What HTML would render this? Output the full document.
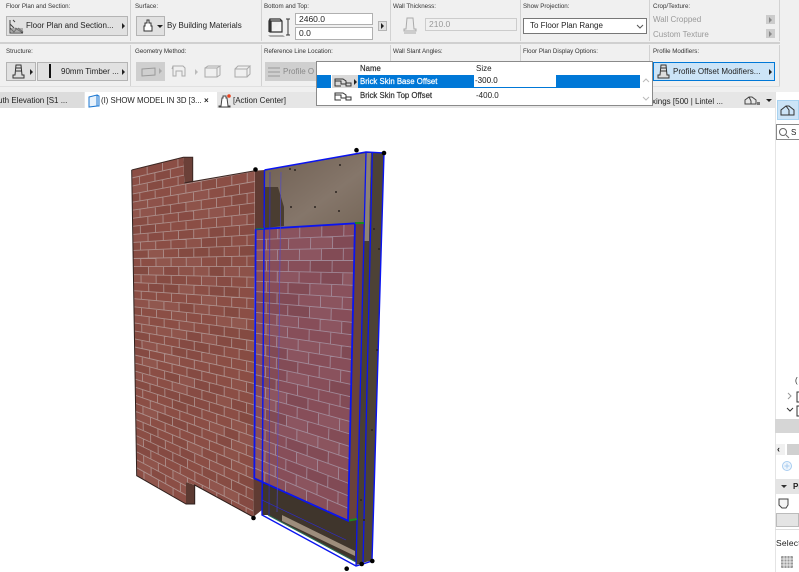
<!DOCTYPE html>
<html><head><meta charset="utf-8">
<style>
html,body{margin:0;padding:0;background:#fff}
#r{position:relative;width:799px;height:572px;overflow:hidden;background:#fff;font-family:"Liberation Sans",sans-serif;color:#222}
#r div,#r span.a{position:absolute;box-sizing:border-box}
.l{font-size:6.2px;color:#333;white-space:nowrap;line-height:9px}
.t{font-size:8px;color:#222;white-space:nowrap;line-height:11px}
.n{font-size:7.8px;-webkit-text-stroke:.2px currentColor;color:#333;white-space:nowrap;line-height:11px}
.b{background:#e1e1e1;border:1px solid #b4b4b4}
.g{background:#cfcfcf}
.i{background:#fff;border:1px solid #b0b0b0;font-size:8.5px;line-height:11px;padding-left:3px}
.v{width:1px;background:#d2d2d2}
.ar{width:0;height:0;border-left:3px solid #222;border-top:3px solid transparent;border-bottom:3px solid transparent}
svg{position:absolute;left:0;top:0}
#s{filter:blur(.35px)}
</style></head><body><div id="r">

<svg id="s" width="799" height="572" viewBox="0 0 799 572">
<defs>
<linearGradient id="wd" x1="0" y1="0" x2="1" y2="1"><stop offset="0" stop-color="#6f5f52"/><stop offset=".6" stop-color="#85766a"/><stop offset="1" stop-color="#766759"/></linearGradient>
<clipPath id="c1"><polygon points="131.7,170 183.3,157.3 184.3,183 255,170.7 253.3,517 195,485 186,482 186,504 136.7,475.7"/></clipPath>
<clipPath id="c2"><polygon points="255.7,229.3 355,223.3 348,520.7 254.3,478.3"/></clipPath>
</defs>
<!-- left wall sides -->
<polygon points="183.3,157.3 192.7,157.3 192.7,181.3 184.3,183" fill="#6b4038"/>
<polygon points="186,482 194.7,485 194.7,504 186,504" fill="#5c3a32"/>
<polygon points="255,170.7 264.5,170 262,510 253.3,517" fill="#603b33"/>
<!-- back wood -->
<polygon points="264.5,170 366,152 384,153 372,561 356,562 268,515 262,515" fill="#3f352c"/>
<polygon points="264.5,170 366,153 364,224 264,228" fill="url(#wd)"/>
<polygon points="265,187 278,187 284,207 284,226 265,228" fill="#4a3d31"/>
<polygon points="366,153 371,153 369,241 364,241" fill="#8f8276"/>
<polygon points="371,153 384,153 372,560 363,563 369,241" fill="#4d4236"/>
<polygon points="364,241 369,241 363,563 356,565" fill="#4a3f33"/>
<polygon points="282,515 355,551 355,556 282,521" fill="#9d8d7c"/>
<polygon points="262,515 268,515 356,562 356,566" fill="#fff"/>
<line x1="268" y1="515" x2="356" y2="562" stroke="#2b6b55" stroke-width="1"/>
<!-- panel side -->
<polygon points="355,223.3 364,223 357,519 348,520.7" fill="#6a423b"/>
<g id="w1" clip-path="url(#c1)"></g>
<g id="w2" clip-path="url(#c2)"></g>
<polyline points="131.7,170 183.3,157.3 192.7,157.3 192.7,181.3 184.3,183 255,170.7" fill="none" stroke="#3a2622" stroke-width="1"/>
<polyline points="131.7,170 136.7,475.7 186,504 194.7,504 194.7,485 253.3,517" fill="none" stroke="#2e1f1c" stroke-width="1"/>
<!-- blue -->
<g fill="none" stroke="#0a14f0">
<polyline stroke-width="1.4" points="264.5,170 366,152 384,153 372,561 363,564 356,566 262,515 264.5,170"/>
<polyline stroke-width="1.3" points="366,153 356,566"/>
<polyline stroke-width="1.3" points="372.3,153 363,564"/>
<polyline stroke-width="1.8" points="255.7,229.3 355,223.3 348,520.7 254.3,478.3 255.7,229.3"/>
<polyline stroke-width=".6" points="270,172 269,515" stroke="#2a2ae0"/>
<polyline stroke-width=".6" points="281,172 277,512" stroke="#4a46d8"/>
<polyline stroke-width=".6" points="262,500 346,540" stroke="#2a2ae0"/>
</g>
<line x1="256" y1="229" x2="264" y2="228.6" stroke="#1a8a20" stroke-width="1"/>
<line x1="355" y1="223" x2="364" y2="223" stroke="#1a8a20" stroke-width="2"/>
<line x1="349" y1="520.5" x2="357" y2="519" stroke="#1a8a20" stroke-width="2"/>
<g fill="#000">
<circle cx="255.5" cy="169.5" r="2.3"/><circle cx="356.5" cy="150.2" r="2.3"/><circle cx="384" cy="153" r="2.3"/>
<circle cx="253.5" cy="518" r="2.3"/><circle cx="346.7" cy="568.7" r="2.3"/><circle cx="361.7" cy="564" r="2.3"/><circle cx="372.3" cy="561" r="2.3"/>
</g>
<g fill="#2b2420"><circle cx="340" cy="165" r="1"/><circle cx="290" cy="169" r="1"/><circle cx="295" cy="170" r="1"/><circle cx="336" cy="192" r="1"/><circle cx="315" cy="207" r="1"/><circle cx="291" cy="207" r="1"/><circle cx="339" cy="211" r="1"/><circle cx="374" cy="229" r="1"/><circle cx="379" cy="249" r="1"/><circle cx="377" cy="350" r="1"/><circle cx="372" cy="430" r="1"/><circle cx="361" cy="500" r="1"/><circle cx="364" cy="520" r="1"/></g>
</svg>

<!-- toolbar -->
<div style="left:0;top:0;width:799px;height:92px;background:#f0f0f0"></div>
<div style="left:0;top:42px;width:780px;height:2px;background:#d0d0d0"></div>
<div style="left:0;top:86px;width:780px;height:1px;background:#e0e0e0"></div>
<div class="v" style="left:130px;top:0;height:41px"></div><div class="v" style="left:261px;top:0;height:41px"></div><div class="v" style="left:390px;top:0;height:41px"></div><div class="v" style="left:520px;top:0;height:41px"></div><div class="v" style="left:649px;top:0;height:41px"></div><div class="v" style="left:779px;top:0;height:41px"></div>
<div class="v" style="left:130px;top:45px;height:41px"></div><div class="v" style="left:261px;top:45px;height:41px"></div><div class="v" style="left:390px;top:45px;height:41px"></div><div class="v" style="left:520px;top:45px;height:41px"></div><div class="v" style="left:649px;top:45px;height:41px"></div><div class="v" style="left:779px;top:45px;height:41px"></div>

<div class="l" style="left:6px;top:2px">Floor Plan and Section:</div>
<div class="l" style="left:135px;top:2px">Surface:</div>
<div class="l" style="left:264px;top:2px">Bottom and Top:</div>
<div class="l" style="left:393px;top:2px">Wall Thickness:</div>
<div class="l" style="left:523px;top:2px">Show Projection:</div>
<div class="l" style="left:653px;top:2px">Crop/Texture:</div>
<div class="l" style="left:6px;top:47px">Structure:</div>
<div class="l" style="left:135px;top:47px">Geometry Method:</div>
<div class="l" style="left:264px;top:47px">Reference Line Location:</div>
<div class="l" style="left:393px;top:47px">Wall Slant Angles:</div>
<div class="l" style="left:523px;top:47px">Floor Plan Display Options:</div>
<div class="l" style="left:653px;top:47px">Profile Modifiers:</div>

<!-- row 1 -->
<div class="b" style="left:6px;top:16px;width:122px;height:20px"></div>
<svg style="left:9px;top:19px" width="15" height="15"><path d="M1 1v13h13M1 5l4 4M1 9l4 4M4 1l2 2M6 9l8 5M9 9l5 4M5 13l3-4" stroke="#444" fill="none" stroke-width="1"/><rect x="2" y="9" width="12" height="4" fill="#888" opacity=".6"/></svg>
<div class="t" style="left:26px;top:20px">Floor Plan and Section...</div>
<div class="ar" style="left:122px;top:23px"></div>
<div class="b" style="left:136px;top:16px;width:29px;height:20px"></div>
<svg style="left:142px;top:19px" width="12" height="14"><path d="M5 1h2v3h2v3h1v5H2V7h1V4h2z" fill="#fff" stroke="#333"/></svg>
<div style="left:157px;top:25px;width:0;height:0;border-top:3px solid #222;border-left:3px solid transparent;border-right:3px solid transparent"></div>
<div class="t" style="left:167px;top:20px">By Building Materials</div>
<svg style="left:267px;top:17px" width="26" height="22"><path d="M3 2h10l2 2v11H3zM3 2l-1 2v11M15 4H4v11" fill="#f4f4f4" stroke="#333" stroke-width="1.2"/><path d="M1 18h15l2 2H3z" fill="#aaa"/><path d="M21 2v16M19 2h4M19 18h4" stroke="#333" fill="none"/></svg>
<div class="i" style="left:295px;top:13px;width:78px;height:12px">2460.0</div>
<div class="i" style="left:295px;top:27px;width:78px;height:13px">0.0</div>
<div class="b" style="left:378px;top:21px;width:9px;height:10px"></div><div class="ar" style="left:381px;top:23px"></div>
<svg style="left:402px;top:17px" width="16" height="18"><path d="M5 1h6l1 11h2v2H2v-2h2zM2 16h12" stroke="#aaa" fill="#ececec"/></svg>
<div class="i" style="left:425px;top:18px;width:92px;height:13px;background:#f0f0f0;color:#999;border-color:#ccc">210.0</div>
<div class="i" style="left:523px;top:18px;width:124px;height:16px;border-color:#777;padding-left:6px;line-height:14px;font-size:8px;color:#222">To Floor Plan Range</div>
<svg style="left:636px;top:24px" width="8" height="6"><path d="M1 1l3 3 3-3" fill="none" stroke="#555"/></svg>
<div class="t" style="left:653px;top:14px;color:#999">Wall Cropped</div>
<div class="t" style="left:653px;top:29px;color:#999">Custom Texture</div>
<div style="left:766px;top:15px;width:9px;height:9px;background:#ccc"></div><div class="ar" style="left:769px;top:17px;border-left-color:#888"></div>
<div style="left:766px;top:29px;width:9px;height:9px;background:#ccc"></div><div class="ar" style="left:769px;top:31px;border-left-color:#888"></div>

<!-- row 2 -->
<div class="b" style="left:6px;top:62px;width:30px;height:19px"></div>
<svg style="left:12px;top:64px" width="14" height="15"><path d="M4 1h5l1 10h2v3H1v-3h2zM4 4h5M4 7h6" stroke="#333" fill="#ddd"/></svg>
<div class="ar" style="left:30px;top:69px"></div>
<div class="b" style="left:37px;top:62px;width:91px;height:19px"></div>
<div style="left:49px;top:64px;width:2px;height:14px;background:#111"></div>
<div class="t" style="left:61px;top:66px">90mm Timber ...</div>
<div class="ar" style="left:122px;top:69px"></div>
<div class="g" style="left:136px;top:62px;width:29px;height:19px"></div>
<svg style="left:140px;top:64px" width="112" height="16"><g fill="none" stroke="#aaa"><path d="M2 5l13-1v7L2 12z" stroke="#999"/><path d="M33 2h10l2 2v8h-3v-5h-6v5h-3zM33 2l-1 3"/><path d="M65 4h12v9H65zM65 4l3-2h12l-3 2M80 2v9l-3 2"/><path d="M95 5h12v8H95zM95 5l3-3h12l-3 3M110 2v8l-3 3"/></g><path d="M55 5l3 3-3 3z" fill="#bbb"/><path d="M19 4l3 3-3 3z" fill="#aaa"/></svg>
<div class="g" style="left:265px;top:62px;width:60px;height:19px"></div>
<svg style="left:267px;top:66px" width="14" height="12"><path d="M1 2h12M1 6h12M1 10h12" stroke="#999"/></svg>
<div class="t" style="left:283px;top:66px;color:#888">Profile O</div>
<div style="left:653px;top:62px;width:122px;height:19px;background:#cce4f7;border:1px solid #0078d7"></div>
<svg style="left:657px;top:64px" width="14" height="15"><path d="M4 1h5l1 10h2v3H1v-3h2zM4 4h5M4 7h6" stroke="#333" fill="#ddd"/></svg>
<div class="t" style="left:673px;top:66px">Profile Offset Modifiers...</div>
<div class="ar" style="left:769px;top:69px"></div>

<!-- tab bar -->
<div style="left:0;top:92px;width:775px;height:16px;background:#e6e6e6"></div>
<div style="left:0;top:92px;width:84px;height:16px;background:#dcdcdc"></div>
<div style="left:85px;top:92px;width:132px;height:17px;background:#fff"></div>
<div class="t" style="left:-2px;top:95px">uth Elevation [S1 ...</div>
<svg style="left:87px;top:94px" width="14" height="14"><path d="M2 3l8-2v11l-8 1z M10 1l2 1v10l-2 0" fill="#e8f2fb" stroke="#1b77d2" stroke-width="1"/></svg>
<div class="t" style="left:101px;top:95px;font-size:7.8px">(I) SHOW MODEL IN 3D [3...</div>
<div class="t" style="left:204px;top:95px;font-weight:bold">×</div>
<svg style="left:218px;top:93px" width="14" height="15"><path d="M5 3h3v2h1l1 8h2v1H1v-1h2l1-8h1z" fill="#fff" stroke="#444"/><circle cx="11" cy="3" r="1.8" fill="#e8431f"/></svg>
<div class="t" style="left:233px;top:95px">[Action Center]</div>
<div class="t" style="left:652px;top:96px">xings [500 | Lintel ...</div>
<svg style="left:744px;top:95px" width="20" height="12"><path d="M1 9V5l4-3h3l4 3v4zM5 2l2 4v3" fill="none" stroke="#444"/><rect x="13" y="7" width="3" height="3" fill="#777"/></svg>
<div style="left:766px;top:99px;width:0;height:0;border-top:3px solid #222;border-left:3px solid transparent;border-right:3px solid transparent"></div>

<!-- dropdown -->
<div style="left:316px;top:61px;width:337px;height:45px;background:#fff;border:1px solid #8a8a8a"></div>
<div class="n" style="left:360px;top:63px">Name</div>
<div class="t" style="left:476px;top:63px">Size</div>
<div style="left:317px;top:75px;width:14px;height:13px;background:#0078d7"></div>
<div style="left:332px;top:75px;width:26px;height:13px;background:#d9d9d9"></div>
<div style="left:358px;top:75px;width:282px;height:13px;background:#0078d7"></div>
<div style="left:474px;top:75px;width:82px;height:12px;background:#fff;font-size:8px;line-height:12px;padding-left:1px;color:#111">-300.0</div>
<div class="n" style="left:360px;top:76px;color:#fff">Brick Skin Base Offset</div>
<div class="n" style="left:360px;top:90px">Brick Skin Top Offset</div>
<div class="t" style="left:476px;top:90px">-400.0</div>
<svg style="left:333px;top:76px" width="26" height="27"><g fill="none" stroke="#333"><path d="M2 3h8l3 2v2h5v3h-5v-2H8V5H2zM2 3v7h6"/><path d="M2 17h8l3 2v2h5v3h-5v-2H8v-3H2zM2 17v7h6"/></g><path d="M21 3l3 3-3 3z" fill="#222"/></svg>
<svg style="left:640px;top:76px" width="12" height="28"><path d="M3 6l3-3 3 3" fill="none" stroke="#bbb"/><path d="M3 21l3 3 3-3" fill="none" stroke="#bbb"/></svg>

<!-- right panel -->
<div style="left:775px;top:92px;width:24px;height:480px;background:#fff;border-left:1px solid #e4e4e4"></div>
<div style="left:777px;top:100px;width:22px;height:20px;background:#cce4f7;border:1px solid #a8d2f0"></div>
<svg style="left:779px;top:104px" width="18" height="13"><path d="M2 11V6l5-4h3l5 4v5zM7 2l3 4v5" fill="none" stroke="#333"/></svg>
<div style="left:776px;top:124px;width:24px;height:16px;background:#fff;border:1px solid #888"></div>
<svg style="left:778px;top:127px" width="12" height="12"><circle cx="5" cy="5" r="3.5" fill="none" stroke="#666"/><path d="M8 8l3 3" stroke="#666"/></svg>
<div class="t" style="left:791px;top:127px">S</div>
<div class="t" style="left:795px;top:375px">(</div>
<svg style="left:786px;top:391px" width="13" height="26"><path d="M2 2l3 3-3 3" fill="none" stroke="#999"/><path d="M1 17l3 3 3-3" fill="none" stroke="#333"/><path d="M13 1h-2v10h2M13 15h-2v10h2" fill="none" stroke="#333"/></svg>
<div style="left:775px;top:419px;width:24px;height:14px;background:#d6d6d6"></div>
<div style="left:776px;top:444px;width:9px;height:11px;background:#f0f0f0;font-size:9px;font-weight:bold;line-height:11px;padding-left:1px">‹</div>
<div style="left:787px;top:444px;width:12px;height:11px;background:#d0d0d0"></div>
<svg style="left:781px;top:460px" width="12" height="12"><circle cx="6" cy="6" r="4.5" fill="#eef5fc" stroke="#a9cdf0"/><path d="M6 3.5v5M3.5 6h5" stroke="#a9cdf0"/></svg>
<div style="left:776px;top:479px;width:23px;height:15px;background:#e4e4e4"></div>
<div style="left:781px;top:485px;width:0;height:0;border-top:3px solid #333;border-left:3px solid transparent;border-right:3px solid transparent"></div>
<div class="t" style="left:793px;top:481px;font-weight:bold">Pr</div>
<svg style="left:777px;top:497px" width="14" height="13"><path d="M2 2h9v6l-2 3H5L2 8z" fill="#f4f4f4" stroke="#444"/></svg>
<div style="left:776px;top:513px;width:23px;height:14px;background:#e4e4e4;border:1px solid #bbb"></div>
<div style="left:775px;top:529px;width:24px;height:1px;background:#ddd"></div>
<div class="t" style="left:776px;top:538px;font-size:8.5px;letter-spacing:.2px">Selecte</div>
<svg style="left:780px;top:555px" width="14" height="14"><rect x="1" y="1" width="12" height="12" rx="1" fill="#999"/><path d="M1 4h12M1 7h12M1 10h12M4 1v12M7 1v12M10 1v12" stroke="#fff" stroke-width=".8"/></svg>

</div>
<script>
(function(){
var seed=7;function R(){seed=(seed*16807)%2147483647;return seed/2147483647}
function lerp(a,b,t){return [a[0]+(b[0]-a[0])*t,a[1]+(b[1]-a[1])*t]}
function bil(q,u,v){return lerp(lerp(q[0],q[1],u),lerp(q[3],q[2],u),v)}
function draw(id,q,rows,cols,base,mortar,sw){
var g=document.getElementById(id),h='',m='';
var pts=q.map(function(p){return p.join(',')}).join(' ');
h+='<polygon points="'+pts+'" fill="'+base+'"/>';
for(var r=0;r<rows;r++){
var v0=r/rows,v1=(r+1)/rows,off=r%2?0.5:0;
for(var c=-1;c<=cols;c++){
var u0=Math.max(0,(c+off)/cols),u1=Math.min(1,(c+off+1)/cols);
if(u1<=u0)continue;
var a=bil(q,u0,v0),b=bil(q,u1,v0),d=bil(q,u1,v1),e=bil(q,u0,v1);
var k=R();
if(k>0.4){h+='<polygon points="'+a+' '+b+' '+d+' '+e+'" fill="'+(k>0.7?'#000':'#fff')+'" opacity="'+(0.02+R()*0.03).toFixed(3)+'"/>';}
m+='M'+a[0].toFixed(1)+' '+a[1].toFixed(1)+'L'+e[0].toFixed(1)+' '+e[1].toFixed(1);
}
var p=bil(q,0,v0),s=bil(q,1,v0);
m+='M'+p[0].toFixed(1)+' '+p[1].toFixed(1)+'L'+s[0].toFixed(1)+' '+s[1].toFixed(1);
}
h+='<path d="'+m+'" stroke="'+mortar+'" stroke-width="'+sw+'" stroke-opacity=".75" fill="none"/>';
g.innerHTML=h;
}
draw('w1',[[131.7,170],[255,139],[253.3,543],[136.7,475.7]],38,8,'#8b4e45','#b7a3a0',.9);
draw('w2',[[255.7,229.3],[355,223.3],[348,520.7],[254.3,478.3]],24,4.5,'#874e59','#aa9bab',.9);
})();
</script>
</body></html>
